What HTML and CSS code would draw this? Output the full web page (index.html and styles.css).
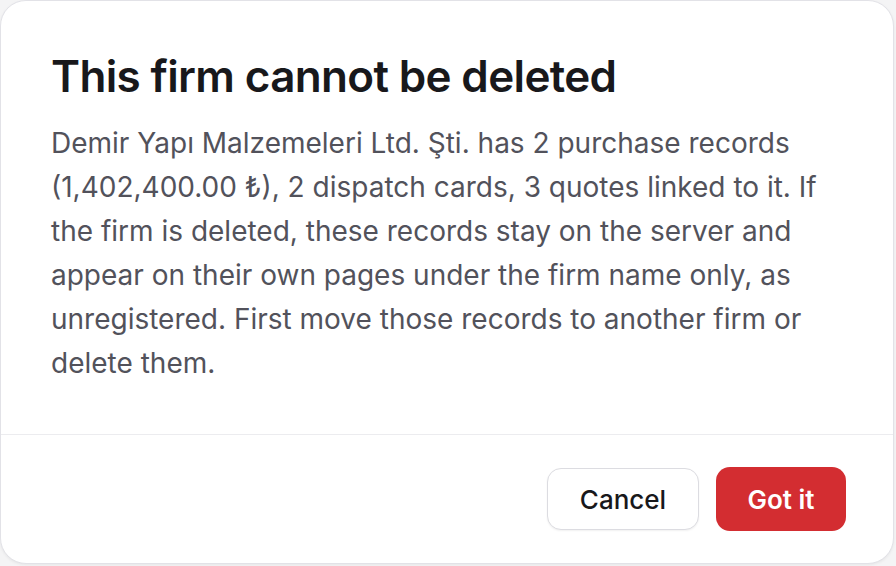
FILE: index.html
```html
<!DOCTYPE html>
<html lang="en">
<head>
<meta charset="utf-8">
<title>This firm cannot be deleted</title>
<link rel="stylesheet" href="styles.css">
</head>
<body>
  <div class="dialog" role="alertdialog" aria-labelledby="dlg-title">
    <div class="dialog-body">
      <h1 id="dlg-title" class="dialog-title">This firm cannot be deleted</h1>
      <p class="dialog-text">Demir Yapı Malzemeleri Ltd. Şti. has 2 purchase records (1,402,400.00 ₺), 2 dispatch cards, 3 quotes linked to it. If the firm is deleted, these records stay on the server and appear on their own pages under the firm name only, as unregistered. First move those records to another firm or delete them.</p>
    </div>
    <div class="dialog-footer">
      <button class="btn btn-secondary" type="button">Cancel</button>
      <button class="btn btn-danger" type="button">Got it</button>
    </div>
  </div>
</body>
</html>
```
FILE: styles.css
```css
html, body {
  margin: 0;
  padding: 0;
  background: #f4f4f5;
}
body {
  width: 896px;
  height: 566px;
  font-family: Inter, "Noto Sans", "Liberation Sans", sans-serif;
}
.dialog {
  box-sizing: border-box;
  width: 894px;
  height: 564px;
  background: #ffffff;
  border: 1px solid #e2e2e7;
  border-radius: 26px;
  box-shadow: 0 1px 3px rgba(0, 0, 0, 0.06);
  display: flex;
  flex-direction: column;
  overflow: hidden;
}
.dialog-body {
  padding: 49px 50px 47px 50px;
  border-bottom: 1px solid #ececef;
  flex: 1;
}
.dialog-title {
  margin: 0;
  font-size: 44px;
  line-height: 53px;
  font-weight: 600;
  color: #18181b;
  letter-spacing: -0.65px;
}
.dialog-text {
  margin: 18px 0 0;
  font-size: 28px;
  line-height: 44px;
  color: #52525b;
}
.dialog-footer {
  display: flex;
  justify-content: flex-end;
  align-items: center;
  gap: 17px;
  padding: 32px 47px 32px;
}
.btn {
  font-family: inherit;
  font-size: 26px;
  font-weight: 500;
  border-radius: 14px;
  padding: 0;
  cursor: pointer;
  white-space: nowrap;
}
.btn-secondary {
  width: 152px;
  height: 62px;
  background: #ffffff;
  color: #18181b;
  border: 1.5px solid #dcdce1;
  box-shadow: 0 1px 2px rgba(0, 0, 0, 0.06);
}
.btn-danger {
  width: 130px;
  height: 64px;
  background: #d32d31;
  color: #ffffff;
  border: none;
  font-weight: 600;
}
```
